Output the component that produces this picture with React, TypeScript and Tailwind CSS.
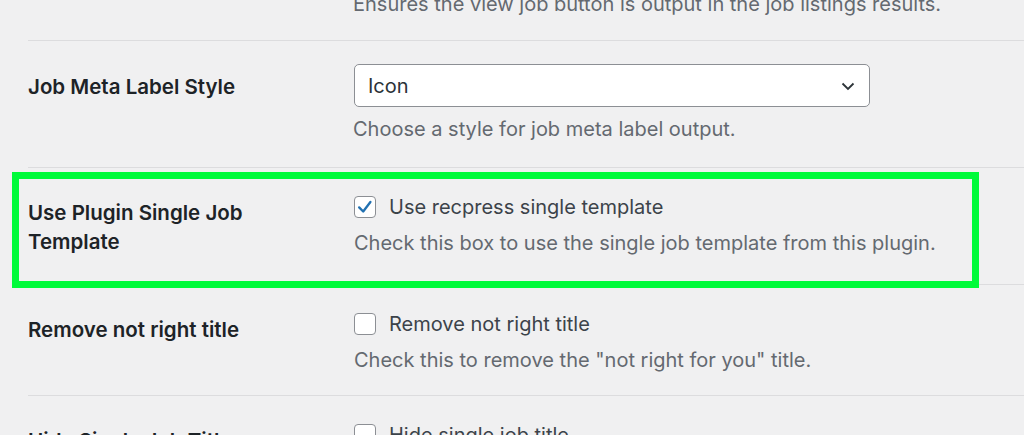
import { ReactNode } from 'react';

const font = { fontFamily: 'Inter, "Liberation Sans", sans-serif' };

function Checkbox({ checked }: { checked?: boolean }) {
  return (
    <span className="flex h-[22px] w-[22px] shrink-0 items-center justify-center rounded-[4px] border border-[#8c8f94] bg-white">
      {checked && (
        <svg viewBox="0 0 20 20" className="h-[18px] w-[18px]" fill="none" stroke="#2271b1" strokeWidth="2.6" strokeLinecap="round" strokeLinejoin="round">
          <polyline points="3.5,10.5 8,15 16,4.5" />
        </svg>
      )}
    </span>
  );
}

function Row({ label, labelPt = 'pt-[30px]', children, className = '' }: { label: ReactNode; labelPt?: string; children: ReactNode; className?: string }) {
  return (
    <div className={`flex border-t border-[#dcdcde] ${className}`}>
      <div className={`w-[326px] shrink-0 pr-[30px] ${labelPt}`}>
        <div className="text-[20.5px] font-semibold leading-[29px] text-[#1d2327]">{label}</div>
      </div>
      <div className="min-w-0 flex-1">{children}</div>
    </div>
  );
}

function CheckField({ checked, text, desc }: { checked?: boolean; text: string; desc: string }) {
  return (
    <div className="pt-[25px]">
      <label className="flex h-[28px] items-center gap-[13px]">
        <Checkbox checked={checked} />
        <span className="text-[20px] leading-[28px] text-[#3c434a]">{text}</span>
      </label>
      <p className="mt-[8px] text-[20px] leading-[28px] text-[#646970]">{desc}</p>
    </div>
  );
}

export default function App() {
  return (
    <div className="h-[435px] w-[1024px] overflow-hidden bg-[#f0f0f1] pl-[28px]" style={font}>
      {/* previous row, scrolled mostly out of view */}
      <div className="flex h-[40px] overflow-hidden">
        <div className="w-[325px] shrink-0" />
        <p className="-mt-[10px] text-[20px] leading-[28px] text-[#646970]">
          Ensures the view job button is output in the job listings results.
        </p>
      </div>

      <Row label="Job Meta Label Style" labelPt="pt-[31px]">
        <div className="pt-[23px] pb-[24px]">
          <div className="flex h-[43px] w-[516px] items-center justify-between rounded-[5px] border border-[#8c8f94] bg-white pl-[13px] pr-[13px]">
            <span className="text-[20px] text-[#2c3338]">Icon</span>
            <svg viewBox="0 0 16 16" className="h-[16px] w-[16px]" fill="none" stroke="#2c3338" strokeWidth="1.8">
              <polyline points="2.5,5.5 8,11 13.5,5.5" />
            </svg>
          </div>
          <p className="mt-[8px] -ml-[1px] text-[20px] leading-[28px] text-[#646970]">Choose a style for job meta label output.</p>
        </div>
      </Row>

      <div className="relative">
        <Row label={<>Use Plugin Single Job<br />Template</>} className="pb-[27px]">
          <CheckField
            checked
            text="Use recpress single template"
            desc="Check this box to use the single job template from this plugin."
          />
        </Row>
        {/* annotation frame */}
        <div className="pointer-events-none absolute left-[-16px] top-[5px] h-[116px] w-[967px] border-[7px] border-[#00fb3a]" />
      </div>

      <Row label="Remove not right title" className="pb-[21px]">
        <CheckField text="Remove not right title" desc='Check this to remove the "not right for you" title.' />
      </Row>

      <Row label="Hide Single Job Title">
        <CheckField text="Hide single job title" desc="Check this to hide the single job title." />
      </Row>
    </div>
  );
}
